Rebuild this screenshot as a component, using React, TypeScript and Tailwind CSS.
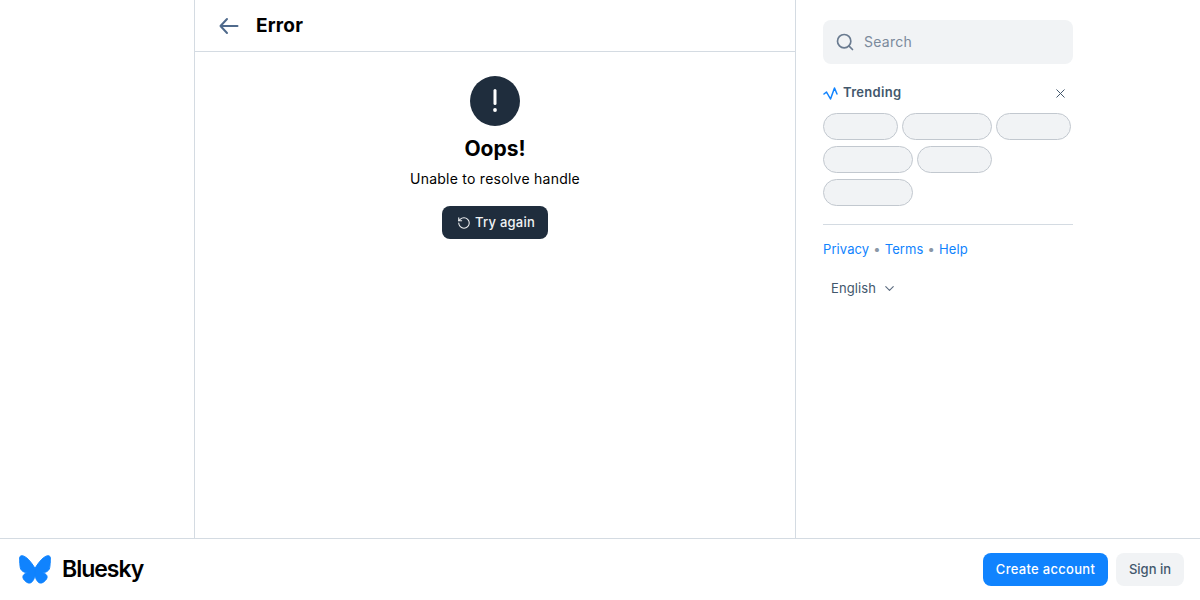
import { ChevronDown, RotateCcw, Search, X } from 'lucide-react';

const chipRows = [
  [75, 90, 75],
  [90, 75],
  [90],
];

function Butterfly() {
  return (
    <svg width="32" height="29" viewBox="-1 -1 66 59" fill="#1083fe" stroke="#1083fe" strokeWidth="2" strokeLinejoin="round">
      <path d="M13.873 3.805C21.21 9.332 29.103 20.537 32 26.55v15.882c0-.338-.13.044-.41.867-1.512 4.456-7.418 21.847-20.923 7.944-7.111-7.32-3.819-14.64 9.125-16.85-7.405 1.264-15.73-.825-18.014-9.015C1.12 23.022 0 8.51 0 6.55 0-3.268 8.579-.182 13.873 3.805Z" />
      <path d="M50.127 3.805C42.79 9.332 34.897 20.537 32 26.55v15.882c0-.338.13.044.41.867 1.512 4.456 7.418 21.847 20.923 7.944 7.111-7.32 3.819-14.64-9.125-16.85 7.405 1.264 15.73-.825 18.014-9.015C62.88 23.022 64 8.51 64 6.55c0-9.818-8.578-6.732-13.873-2.745Z" />
    </svg>
  );
}

function TrendIcon() {
  return (
    <svg width="15" height="15" viewBox="0 0 15 15" fill="none" stroke="#1083fe" strokeWidth="1.5" strokeLinecap="round" strokeLinejoin="round">
      <path d="M1 8 3.5 6 7.5 13 11.5 2 14 8" />
    </svg>
  );
}

function BackArrow() {
  return (
    <svg width="20" height="18" viewBox="0 0 20 18" fill="none" stroke="#4f6a8c" strokeWidth="2" strokeLinecap="round" strokeLinejoin="round">
      <path d="M1.5 9H18.5M8 2 1.5 9 8 16" />
    </svg>
  );
}

function Bang() {
  return (
    <svg width="4" height="24" viewBox="0 0 4 24" fill="white">
      <rect x="0.5" y="0" width="3" height="16" rx="1.5" />
      <circle cx="2" cy="21" r="1.9" />
    </svg>
  );
}

export default function App() {
  return (
    <div className="flex h-[600px] w-[1200px] flex-col overflow-hidden bg-white font-['Inter',sans-serif] text-black">
      <div className="flex min-h-0 flex-1 pl-[194px]">
        <main className="w-[602px] border-x border-[#d4dbe2]">
          <header className="flex h-[52px] items-center border-b border-[#d4dbe2] pl-[24px]">
            <BackArrow />
            <h1 className="ml-[17px] translate-y-[1px] text-[19px] font-bold tracking-[0.2px]">Error</h1>
          </header>

          <div className="flex flex-col items-center pt-6">
            <div className="flex h-[50px] w-[50px] items-center justify-center rounded-full bg-[#1f2d3d]">
              <Bang />
            </div>
            <h2 className="mt-[9px] text-[21px] leading-[28px] font-bold">Oops!</h2>
            <p className="mt-[5px] text-[14px] leading-[22px] tracking-[0.25px]">Unable to resolve handle</p>
            <button className="mt-[16px] flex h-[33px] w-[106px] items-center justify-center gap-[4px] rounded-lg bg-[#1f2d3d] pl-[2px] text-[13px] font-medium tracking-[0.25px] text-[#f1f3f5]">
              <RotateCcw size={14} strokeWidth={1.8} />
              Try again
            </button>
          </div>
        </main>

        <aside className="ml-[27px] w-[250px] pt-5">
          <div className="flex h-11 items-center gap-[9px] rounded-lg bg-[#f1f3f5] pl-[12px]">
            <Search size={20} strokeWidth={2} className="text-[#6a7b90]" />
            <span className="-translate-y-[1px] text-[14px] tracking-[0.25px] text-[#7b8a9c]">Search</span>
          </div>

          <div className="mt-[20px] flex h-[18px] items-center">
            <TrendIcon />
            <span className="ml-[5px] text-[13px] font-semibold tracking-[0.3px] text-[#42576c]">Trending</span>
            <X size={15} strokeWidth={1.6} className="ml-auto mr-[5px] text-[#42576c]" />
          </div>

          <div className="mt-[11px] flex flex-col gap-[6px]">
            {chipRows.map((row, i) => (
              <div key={i} className="flex gap-[4px]">
                {row.map((w, j) => (
                  <div
                    key={j}
                    className="h-[27px] rounded-full border border-[#c2c8cf] bg-[#f1f3f5]"
                    style={{ width: w }}
                  />
                ))}
              </div>
            ))}
          </div>

          <div className="mt-[18px] border-t border-[#d4dbe2] pt-[15px]">
            <div className="flex items-center text-[13px] leading-[18px] tracking-[0.1px] text-[#1083fe]">
              <span>Privacy</span>
              <span className="mx-[4px] text-[#8a97a6]">•</span>
              <span>Terms</span>
              <span className="mx-[4px] text-[#8a97a6]">•</span>
              <span>Help</span>
            </div>
            <div className="mt-[21px] flex items-center pl-2 text-[13px] leading-[18px] tracking-[0.1px] text-[#42576c]">
              English
              <ChevronDown size={15} strokeWidth={1.8} className="ml-[6px] text-[#5b6b7f]" />
            </div>
          </div>
        </aside>
      </div>

      <footer className="flex h-[62px] items-center border-t border-[#d4dbe2] pl-[19px] pr-4">
        <Butterfly />
        <span className="ml-[11px] text-[23px] font-semibold tracking-[-1px]">Bluesky</span>
        <button className="ml-auto h-[33px] w-[125px] rounded-lg bg-[#1083fe] text-[13px] font-medium tracking-[0.3px] text-white">
          Create account
        </button>
        <button className="ml-2 h-[33px] w-[68px] rounded-lg bg-[#f1f3f5] text-[13px] font-medium text-[#42576c]">
          Sign in
        </button>
      </footer>
    </div>
  );
}
